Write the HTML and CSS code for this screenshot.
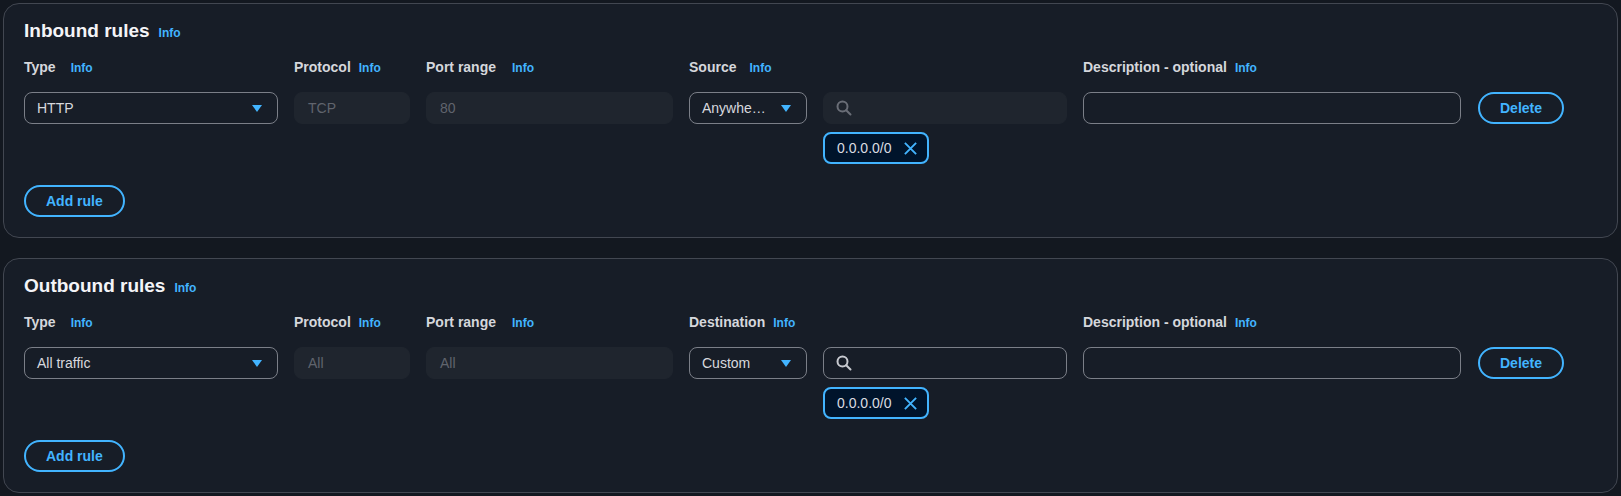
FILE: index.html
```html
<!DOCTYPE html>
<html lang="en">
<head>
<meta charset="utf-8">
<title>Security group rules</title>
<link rel="stylesheet" href="styles.css">
</head>
<body>
<main class="page">
  <section class="panel">
    <h2 class="panel-title">Inbound rules <a class="info info-title">Info</a></h2>
    <div class="rules-grid">
      <div class="label"><span>Type</span><a class="info gap-15">Info</a></div>
      <div class="label"><span>Protocol</span><a class="info gap-8">Info</a></div>
      <div class="label"><span>Port range</span><a class="info gap-16">Info</a></div>
      <div class="label"><span>Source</span><a class="info gap-13">Info</a></div>
      <div class="label"></div>
      <div class="label"><span>Description - optional</span><a class="info gap-8">Info</a></div>
      <div class="label"></div>

      <div class="select"><span class="select-text">HTTP</span><svg class="caret" viewBox="0 0 16 16"><path d="M3 5h10l-5 7z"/></svg></div>
      <div class="field disabled">TCP</div>
      <div class="field disabled">80</div>
      <div class="select"><span class="select-text">Anywhe…</span><svg class="caret" viewBox="0 0 16 16"><path d="M3 5h10l-5 7z"/></svg></div>
      <div class="search-cell">
        <div class="field disabled search"><svg class="search-icon" viewBox="0 0 16 16"><circle cx="6.5" cy="6.5" r="5"/><path d="M10.2 10.2l4.3 4.3"/></svg></div>
        <div class="token"><span>0.0.0.0/0</span><svg class="token-x" viewBox="0 0 16 16"><path d="M2 2l12 12M14 2L2 14"/></svg></div>
      </div>
      <div class="field"></div>
      <div class="action"><button class="btn">Delete</button></div>
    </div>
    <button class="btn add">Add rule</button>
  </section>

  <section class="panel">
    <h2 class="panel-title">Outbound rules <a class="info info-title">Info</a></h2>
    <div class="rules-grid">
      <div class="label"><span>Type</span><a class="info gap-15">Info</a></div>
      <div class="label"><span>Protocol</span><a class="info gap-8">Info</a></div>
      <div class="label"><span>Port range</span><a class="info gap-16">Info</a></div>
      <div class="label"><span>Destination</span><a class="info gap-8">Info</a></div>
      <div class="label"></div>
      <div class="label"><span>Description - optional</span><a class="info gap-8">Info</a></div>
      <div class="label"></div>

      <div class="select"><span class="select-text">All traffic</span><svg class="caret" viewBox="0 0 16 16"><path d="M3 5h10l-5 7z"/></svg></div>
      <div class="field disabled">All</div>
      <div class="field disabled">All</div>
      <div class="select"><span class="select-text">Custom</span><svg class="caret" viewBox="0 0 16 16"><path d="M3 5h10l-5 7z"/></svg></div>
      <div class="search-cell">
        <div class="field search active"><svg class="search-icon" viewBox="0 0 16 16"><circle cx="6.5" cy="6.5" r="5"/><path d="M10.2 10.2l4.3 4.3"/></svg></div>
        <div class="token"><span>0.0.0.0/0</span><svg class="token-x" viewBox="0 0 16 16"><path d="M2 2l12 12M14 2L2 14"/></svg></div>
      </div>
      <div class="field"></div>
      <div class="action"><button class="btn">Delete</button></div>
    </div>
    <button class="btn add">Add rule</button>
  </section>
</main>
</body>
</html>
```

FILE: styles.css
```css
* { box-sizing: border-box; }

html, body {
  margin: 0;
  background: #131820;
}

body {
  font-family: "Liberation Sans", Arial, sans-serif;
  color: #d5d7dc;
}

.page {
  display: flex;
  flex-direction: column;
  gap: 20px;
  padding: 3px 3px 0 3px;
}

.panel {
  width: 1615px;
  background: #171d27;
  border: 1px solid #424751;
  border-radius: 16px;
  padding: 15px 20px 20px 20px;
}

.panel-title {
  margin: 0;
  display: flex;
  align-items: baseline;
  font-size: 19px;
  line-height: 24px;
  font-weight: 700;
  color: #f4f4f7;
}

.info {
  font-size: 12px;
  font-weight: 700;
  color: #42b4ff;
  line-height: 16px;
}

.info-title { margin-left: 9px; }
.gap-8 { margin-left: 8px; }
.gap-13 { margin-left: 13px; }
.gap-15 { margin-left: 15px; }
.gap-16 { margin-left: 16px; }

.rules-grid {
  margin-top: 13px;
  display: grid;
  grid-template-columns: 254px 116px 247px 118px 244px 378px 88px;
  column-gap: 16px;
  row-gap: 14px;
  align-items: start;
}

.label {
  display: flex;
  align-items: baseline;
  font-size: 14px;
  line-height: 22px;
  font-weight: 700;
  color: #d5d7dc;
  height: 22px;
}

.select,
.field {
  height: 32px;
  border-radius: 8px;
  font-size: 14px;
  display: flex;
  align-items: center;
}

.select {
  border: 1px solid #7b7f88;
  padding: 0 12px 0 12px;
  color: #d7d9de;
}

.select-text {
  flex: 1;
  min-width: 0;
  white-space: nowrap;
  margin-right: 8px;
}

.caret {
  width: 16px;
  height: 16px;
  flex: none;
  fill: #42b4ff;
}

.field {
  border: 1px solid #7b7f88;
  padding: 0 13px;
}

.field.disabled {
  background: #1f252e;
  border-color: #1f252e;
  color: #60646d;
}

.search-cell {
  display: flex;
  flex-direction: column;
  align-items: flex-start;
  gap: 8px;
}

.search {
  width: 100%;
  padding: 0 12px;
}

.search-icon {
  width: 16px;
  height: 16px;
  fill: none;
  stroke: #6a6e77;
  stroke-width: 2;
  stroke-linecap: round;
}

.search.active .search-icon { stroke: #c8cad0; }

.token {
  height: 32px;
  display: flex;
  align-items: center;
  gap: 11px;
  padding: 0 9px 0 12px;
  border: 2px solid #42b4ff;
  border-radius: 8px;
  background: #00142b;
  font-size: 14px;
  color: #dadce1;
}

.token-x {
  width: 15px;
  height: 15px;
  fill: none;
  stroke: #42b4ff;
  stroke-width: 2;
}

.action {
  padding-left: 1px;
}

.btn {
  height: 32px;
  padding: 0 20px;
  border: 2px solid #42b4ff;
  border-radius: 16px;
  background: transparent;
  color: #42b4ff;
  font-family: "Liberation Sans", Arial, sans-serif;
  font-size: 14px;
  font-weight: 700;
  line-height: 28px;
}

.btn.add {
  margin-top: 21px;
  display: block;
}
```
